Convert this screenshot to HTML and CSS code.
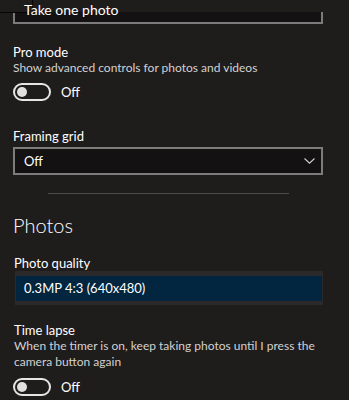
FILE: index.html
```html
<!DOCTYPE html>
<html lang="en">
<head>
    <meta charset="UTF-8">
    <meta name="viewport" content="width=device-width, initial-scale=1.0">
    <title>Camera Settings</title>
    <link rel="stylesheet" href="styles.css">
</head>
<body>
    <div class="top-strip"></div>
    <div class="corner"></div>
    <div class="page">
        <div class="combo combo-cut">
            <span class="combo-text">Take one photo</span>
        </div>

        <div class="setting pro">
            <div class="label">Pro mode</div>
            <div class="desc">Show advanced controls for photos and videos</div>
            <div class="toggle-row">
                <span class="toggle"><span class="knob"></span></span>
                <span class="toggle-text">Off</span>
            </div>
        </div>

        <div class="setting grid">
            <div class="label">Framing grid</div>
            <div class="combo">
                <span class="combo-text">Off</span>
                <svg class="chevron" viewBox="0 0 11 6" fill="none" stroke="currentColor" stroke-width="1.1">
                    <polyline points="0.5 0.5 5.5 5.2 10.5 0.5"></polyline>
                </svg>
            </div>
        </div>

        <div class="divider"></div>

        <h2 class="section-title">Photos</h2>

        <div class="setting quality">
            <div class="label">Photo quality</div>
            <div class="list">
                <div class="list-item selected">0.3MP 4:3 (640x480)</div>
            </div>
        </div>

        <div class="setting lapse">
            <div class="label">Time lapse</div>
            <div class="desc">When the timer is on, keep taking photos until I press the camera button again</div>
            <div class="toggle-row">
                <span class="toggle"><span class="knob"></span></span>
                <span class="toggle-text">Off</span>
            </div>
        </div>
    </div>
</body>
</html>
```

FILE: styles.css
```css
:root {
    --bg: #1f1c1c;
    --field: #131111;
    --field-border: #7d7b7b;
    --text: #ffffff;
    --text-dim: #d2d2d2;
    --line: #4d4b4b;
    --accent: #022540;
    --list-bg: #2b2929;
}

* {
    margin: 0;
    padding: 0;
    box-sizing: border-box;
}

html, body {
    height: 100%;
}

body {
    font-family: Lato, "Noto Sans", sans-serif;
    background-color: var(--bg);
    color: var(--text);
    overflow: hidden;
    position: relative;
}

/* strip of chrome over the scrolled content */
.top-strip {
    position: absolute;
    top: 0;
    left: 0;
    right: 0;
    height: 12px;
    background-color: var(--bg);
    z-index: 1;
}

.corner {
    position: absolute;
    top: 0;
    left: 0;
    width: 33px;
    height: 13px;
    border-right: 1px solid #060505;
    border-bottom: 1px solid #060505;
    background-color: var(--bg);
    z-index: 2;
}

.page {
    padding: 0 26px 0 13px;
}

/* combo boxes */
.combo {
    height: 28px;
    border: 2px solid var(--field-border);
    background-color: var(--field);
    display: flex;
    align-items: center;
    justify-content: space-between;
    padding: 0 6px 0 9px;
    font-size: 13px;
}

.combo-cut {
    height: 24px;
    border-top: none;
    align-items: flex-start;
}

.combo-cut .combo-text {
    line-height: 19px;
    font-size: 14px;
    position: relative;
    z-index: 3;
}

.chevron {
    width: 11px;
    height: 6px;
    color: #d0d0d0;
}

/* settings */
.label {
    font-size: 13px;
    line-height: 16px;
}

.desc {
    font-size: 12px;
    line-height: 16px;
    color: var(--text-dim);
}

.pro {
    margin-top: 20px;
}

.grid {
    margin-top: 27px;
}

.grid .label {
    margin-bottom: 3px;
}

.toggle-row {
    display: flex;
    align-items: center;
    gap: 10px;
    margin-top: 7px;
}

.toggle {
    width: 38px;
    height: 18px;
    border: 2px solid #e6e6e6;
    border-radius: 9px;
    display: flex;
    align-items: center;
    padding-left: 2px;
}

.knob {
    width: 10px;
    height: 10px;
    border-radius: 50%;
    background-color: #e0e0e0;
}

.toggle-text {
    font-size: 13px;
    line-height: 18px;
}

.divider {
    height: 1px;
    width: 241px;
    margin: 18px auto 0;
    background-color: var(--line);
}

.section-title {
    font-size: 20px;
    font-weight: 300;
    line-height: 26px;
    margin-top: 18px;
}

.quality {
    margin-top: 18px;
}

.quality .label {
    line-height: 15px;
    margin-left: 1px;
}

.list {
    background-color: var(--list-bg);
    padding: 5px 1px 4px 1px;
    margin-left: 2px;
}

.list-item {
    font-size: 13px;
    line-height: 25px;
    padding-left: 8px;
}

.list-item.selected {
    background-color: var(--accent);
}

.lapse {
    margin-top: 17px;
    padding-left: 1px;
}

.lapse .toggle-row {
    margin-top: 8px;
    margin-left: -1px;
}
```
